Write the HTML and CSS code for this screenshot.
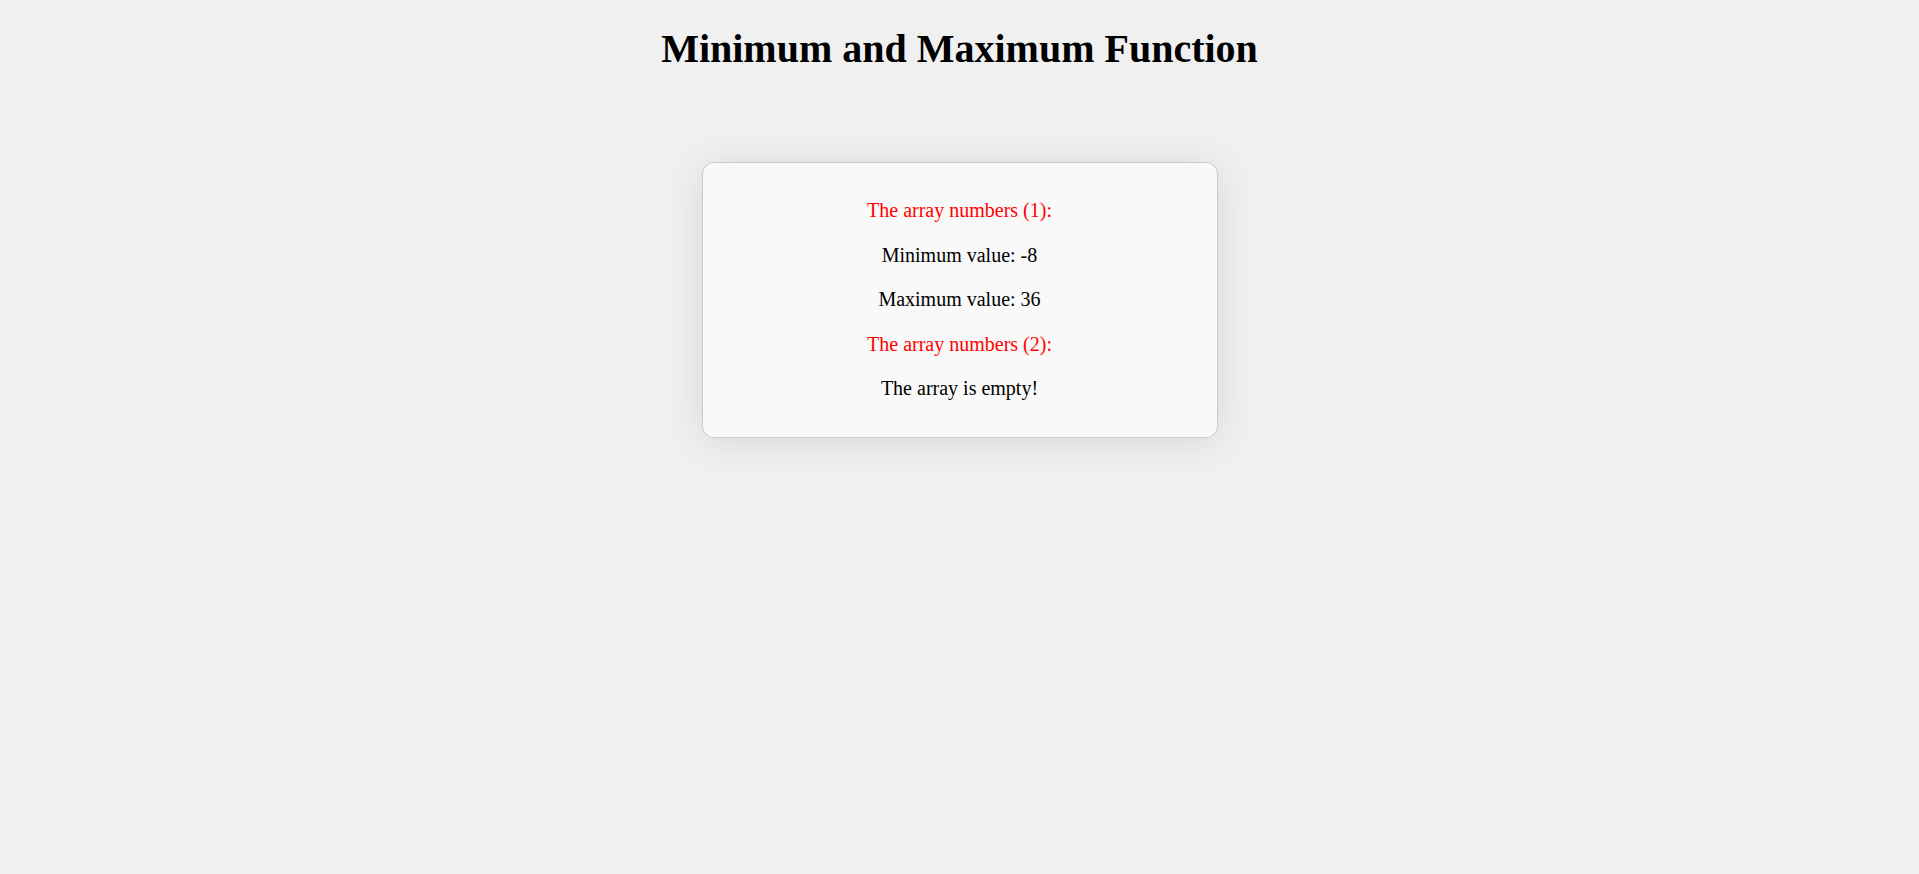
FILE: index.html
```html
<!DOCTYPE html>
<html>
<head>
<meta charset="utf-8">
<title>Minimum and Maximum Function</title>
<link rel="stylesheet" href="styles.css">
</head>
<body>
<h1 class="title">Minimum and Maximum Function</h1>
<div class="card">
  <p class="label">The array numbers (1):</p>
  <p class="line">Minimum value: -8</p>
  <p class="line">Maximum value: 36</p>
  <p class="label">The array numbers (2):</p>
  <p class="line">The array is empty!</p>
</div>
</body>
</html>
```
FILE: styles.css
```css
html {
  min-height: 100%;
  background: #f0f0f0;
}
body {
  margin: 8px;
  padding-bottom: 200px;
  background: #f0f0f0;
  font-family: "Liberation Serif", "Times New Roman", serif;
  color: #000;
}
.title {
  text-align: center;
  font-size: 40px;
  margin: 17px 0 0;
}
.card {
  box-sizing: border-box;
  width: 516px;
  margin: 90px auto 0;
  padding: 15px 20px 16px;
  background: #f9f9f9;
  border: 1px solid #ccc;
  border-radius: 12px;
  box-shadow: 0 4px 40px rgba(0, 0, 0, 0.1);
  text-align: center;
}
.card p {
  font-size: 20px;
  line-height: 24.6px;
  margin: 20px 0;
}
.label {
  color: #f00;
}
```
